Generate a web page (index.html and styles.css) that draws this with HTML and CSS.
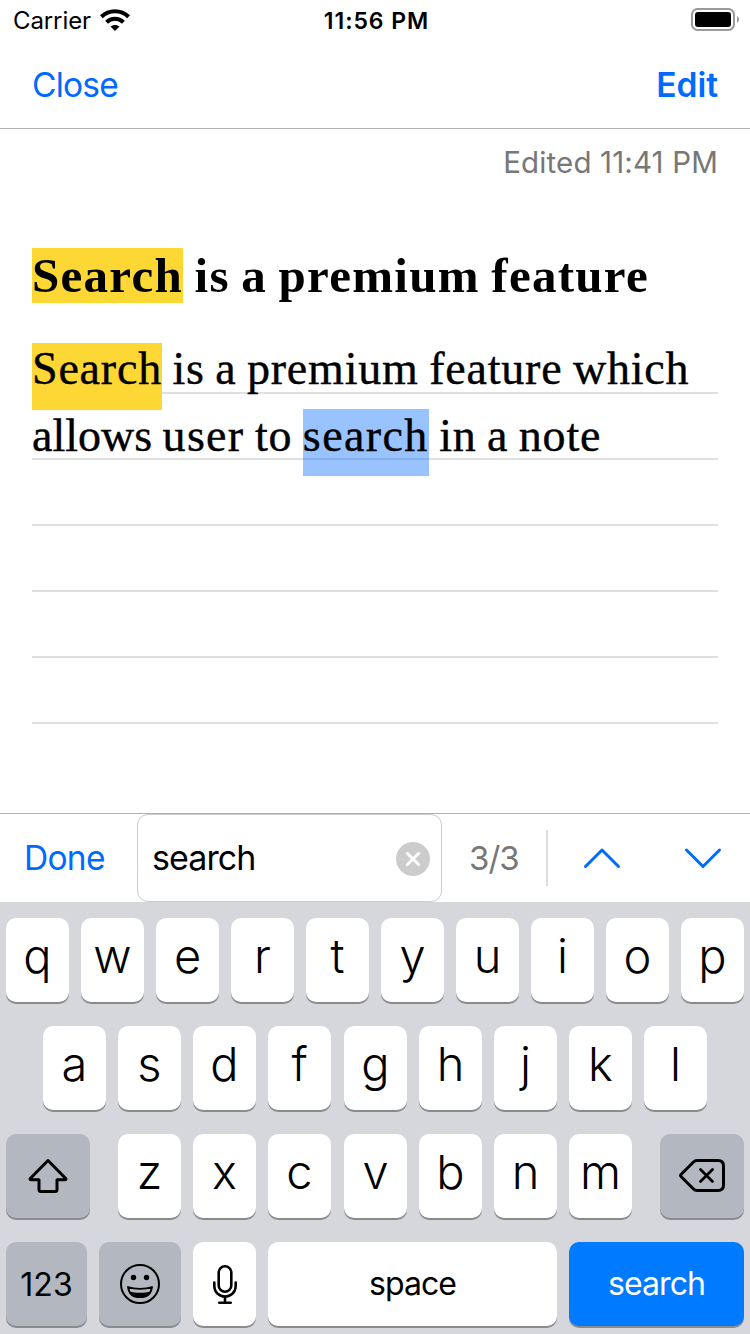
FILE: index.html
```
<!DOCTYPE html>
<html lang="en">
<head>
<meta charset="utf-8">
<title>Note</title>
<link rel="stylesheet" href="styles.css">
</head>
<body>
<div class="screen">
  <div class="status">
    <div class="carrier"><span>Carrier</span>
      <svg class="wifi" width="30" height="22" viewBox="0 0 30 22"><g fill="none" stroke="#000" stroke-width="4"><path d="M1.4 7.8C9 .4 21 .4 28.6 7.8"/><path d="M6.6 13.2C11.3 8.700 18.700 8.700 23.400 13.200"/></g><path d="M10.500 17.600C13 15.300 17 15.300 19.500 17.600L15 22z"/></svg>
    </div>
    <div class="clock">11:56 PM</div>
    <svg class="battery" width="49" height="24" viewBox="0 0 49 24"><rect x="1" y="1" width="42" height="21" rx="5.500" fill="none" stroke="#999" stroke-width="2"/><rect x="4" y="4" width="36" height="15" rx="3" /><path d="M46 8v7c2.600-1.400 2.600-5.600 0-7z" fill="#999"/></svg>
  </div>
  <header class="nav"><a class="close">Close</a><a class="edit">Edit</a></header>
  <main class="note">
    <div class="edited">Edited 11:41 PM</div>
    <h1 class="title"><mark class="hit">Search</mark> is a premium feature</h1>
    <div class="paper">
      <div class="line"><mark class="hit">Search</mark> is a premium feature which</div>
      <div class="line second"><span class="tight">allows</span> <span class="loose">user</span> to <mark class="current">search</mark> in a note</div>
    </div>
  </main>
  <div class="find">
    <a class="done">Done</a>
    <div class="field"><span>search</span>
      <svg width="34" height="34" viewBox="0 0 34 34"><circle cx="17" cy="17" r="17" fill="#ccc"/><path d="M11.200 11.200l11.600 11.600M22.800 11.200L11.200 22.800" stroke="#fff" stroke-width="2.800" stroke-linecap="round"/></svg>
    </div>
    <div class="count">3/3</div>
    <div class="divider"></div>
    <svg class="up" width="38" height="24" viewBox="0 0 38 24"><path d="M2.500 20.500L19 4l16.500 16.500"/></svg>
    <svg class="down" width="38" height="24" viewBox="0 0 38 24"><path d="M2.500 4L19 20.500 35.500 4"/></svg>
  </div>
  <div class="keyboard">
    <div class="row"><div class="key">q</div><div class="key">w</div><div class="key">e</div><div class="key">r</div><div class="key">t</div><div class="key">y</div><div class="key">u</div><div class="key">i</div><div class="key">o</div><div class="key">p</div></div>
    <div class="row middle"><div class="key">a</div><div class="key">s</div><div class="key">d</div><div class="key wide-gap">f</div><div class="key">g</div><div class="key">h</div><div class="key">j</div><div class="key">k</div><div class="key">l</div></div>
    <div class="row spread">
      <div class="key gray shift"><svg width="40" height="36" viewBox="0 0 40 36"><path d="M20 2.500L2.500 20.200Q1.300 21.700 3 21.700H11V31.500Q11 33.500 13 33.500H27Q29 33.500 29 31.500V21.700H37Q38.700 21.700 37.500 20.200Z" fill="none" stroke="#000" stroke-width="3" stroke-linejoin="round"/></svg></div>
      <div class="row letters"><div class="key">z</div><div class="key">x</div><div class="key wide-gap">c</div><div class="key">v</div><div class="key">b</div><div class="key">n</div><div class="key">m</div></div>
      <div class="key gray delete"><svg width="48" height="36" viewBox="0 0 48 36"><g fill="none" stroke="#000" stroke-width="3" stroke-linecap="round" stroke-linejoin="round"><path d="M19 2.500H40Q45.500 2.500 45.500 8V27Q45.500 32.500 40 32.500H19Q17 32.500 15.500 31L3 18.500Q2 17.500 3 16.500L15.500 4Q17 2.500 19 2.500Z"/><path d="M22.500 11.500l12 12M34.500 11.500l-12 12" stroke-width="2.800"/></g></svg></div>
    </div>
    <div class="row">
      <div class="key gray label num">123</div>
      <div class="key gray emoji"><svg width="42" height="42" viewBox="0 0 42 42"><circle cx="21" cy="21" r="19" fill="none" stroke="#000" stroke-width="2"/><circle cx="14.500" cy="14.500" r="2.700"/><circle cx="27.500" cy="14.500" r="2.700"/><path d="M9 24C16 26.500 26 26.500 33 24C32 31 27 34.200 21 34.200S10 31 9 24Z" fill="none" stroke="#000" stroke-width="1.800" stroke-linejoin="round"/><path d="M10 28.500C17 30.300 25 30.300 32 28.500C30 33 26 34.500 21 34.500S12 33 10 28.500Z"/></svg></div>
      <div class="key mic"><svg width="26" height="42" viewBox="0 0 26 42"><g fill="none" stroke="#000" stroke-width="2.600" stroke-linecap="round"><rect x="6.700" y="3.300" width="12.600" height="25.400" rx="6.300"/><path d="M2.300 19.500V22.500C2.300 37.200 23.700 37.200 23.700 22.500V19.500M13 33.500V39.500M7.300 39.700H18.700"/></g></svg></div>
      <div class="key label space">space</div>
      <div class="key label go">search</div>
    </div>
  </div>
</div>
</body>
</html>
```
FILE: styles.css
```
* { box-sizing: border-box; }
body { margin: 0; background: #fff; color: #000; font-family: Inter, "Liberation Sans", sans-serif; }
svg { display: block; flex: none; }
.screen { width: 750px; height: 1334px; overflow: hidden; display: flex; flex-direction: column; }
.status { height: 40px; display: grid; grid-template-columns: 1fr auto 1fr; padding: 0 10px 0 13px; font-size: 24px; line-height: 42px; }
.carrier { display: flex; gap: 9px; letter-spacing: -0.1px; }
.wifi { margin-top: 9px; }
.clock { font-weight: 600; font-size: 23px; letter-spacing: 0.95px; }
.battery { justify-self: end; margin-top: 8px; }
.nav { height: 89px; border-bottom: 1px solid #b0b0b0; display: flex; justify-content: space-between; padding: 0 32px; line-height: 90px; font-size: 33.5px; color: #006aff; }
.close { letter-spacing: -0.8px; }
.edit { font-weight: 600; }
.note { flex: 1; padding: 0 32px; }
.edited { height: 68px; line-height: 67px; text-align: right; font-size: 29.5px; letter-spacing: 0.15px; color: #777; }
mark { display: inline-block; color: inherit; }
.hit { background: #fdd835; }
.current { background: rgba(0, 106, 255, 0.4); letter-spacing: 1.4px; }
.title { margin: 51px 0 0; height: 55px; line-height: 56px; font-family: "Liberation Serif", serif; font-size: 49px; font-weight: 700; letter-spacing: 1.27px; word-spacing: -2px; white-space: nowrap; }
.title .hit { height: 55px; }
.paper { margin-top: 40px; height: 382px; background: repeating-linear-gradient(#fff 0 49px, #e0e0e0 49px 51px, #fff 51px 66px); font-family: "Liberation Serif", serif; font-size: 46px; letter-spacing: 0.8px; word-spacing: -1.8px; -webkit-text-stroke: 0.4px #000; }
.line { height: 66px; line-height: 52px; white-space: nowrap; }
.second { line-height: 54px; }
.tight { letter-spacing: 0; }
.loose { letter-spacing: 1.3px; }
.line mark { height: 67px; }
.find { height: 89px; border-top: 1px solid #b0b0b0; display: flex; align-items: center; font-size: 34px; }
.done { width: 137px; padding-left: 24px; color: #006aff; font-size: 33.5px; letter-spacing: -0.7px; }
.field { width: 305px; height: 88px; border: 1px solid #ccc; border-radius: 11px; display: flex; align-items: center; justify-content: space-between; padding: 1px 11px 0 14px; letter-spacing: -0.9px; }
.field span { margin-top: -2px; }
.count { width: 104px; padding-left: 27px; color: #777; font-size: 33px; letter-spacing: -1px; }
.divider { width: 2px; height: 56px; background: #ddd; }
.up, .down { fill: none; stroke: #006aff; stroke-width: 3; stroke-linecap: round; stroke-linejoin: round; }
.up { margin-left: 35px; }
.down { margin-left: 63px; }
.keyboard { height: 432px; background: #d6d7dd; padding: 16px 6px 0; display: flex; flex-direction: column; gap: 24px; }
.row { display: flex; gap: 12px; height: 84px; }
.middle { padding-left: 37px; }
.spread { justify-content: space-between; gap: 0; }
.wide-gap { margin-right: 1px; }
.key { width: 63px; height: 84px; border-radius: 10px; background: #fff; box-shadow: 0 2px 0 #8a8b8f; display: flex; justify-content: center; font-size: 47px; font-weight: 350; line-height: 76px; }
.gray { background: #b2b7c0; }
.shift, .delete { width: 84px; }
.shift svg, .delete svg { margin-top: 24px; }
.label { font-size: 32px; font-weight: 400; line-height: 83px; letter-spacing: -0.9px; }
.num { width: 81px; letter-spacing: 0; line-height: 86px; }
.emoji { width: 82px; }
.emoji svg, .mic svg { margin-top: 21px; }
.space { width: 289px; }
.go { width: 175px; background: #007aff; color: #fff; }
```
